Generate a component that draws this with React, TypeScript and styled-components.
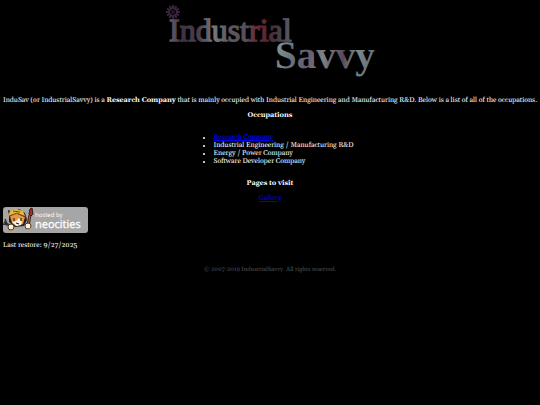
import React from "react";
import styled, { createGlobalStyle } from "styled-components";

const GlobalStyle = createGlobalStyle`
  body {
    margin: 0;
    background: #000;
    color: #fff;
    font-family: Georgia, Gelasio, "Liberation Serif", serif;
    font-size: 7px;
    line-height: 8px;
    text-rendering: geometricPrecision;
  }
`;

const Page = styled.main`
  display: flex;
  flex-direction: column;
`;

const Banner = styled.header`
  display: flex;
  justify-content: center;
  height: 80px;
  margin-bottom: 17px;
`;

const Logo = styled.svg`
  width: 216px;
  height: 80px;
`;

const Intro = styled.p`
  margin: 0;
  text-align: center;
`;

const Heading = styled.h2`
  margin: 7px 0 0;
  font-size: 7px;
  line-height: 8px;
  text-align: center;
`;

const Occupations = styled.ul`
  align-self: center;
  margin: 14px 0 7px;
  padding-left: 27px;
`;

const Link = styled.a`
  color: #0000ee;
`;

const GalleryLine = styled.p`
  margin: 7px 0 4px;
  text-align: center;
`;

const BadgeLink = styled.a`
  display: block;
  align-self: flex-start;
  height: 26px;
  margin-left: 3px;
`;

const Restore = styled.p`
  margin: 9px 3px 16px;
`;

const Footer = styled.footer`
  color: #505050;
  text-align: center;
  font-size: 6px;
`;

const teeth = Array.from({ length: 12 }, (_, i) => i * 30);

function Wordmark() {
  return (
    <Logo viewBox="0 0 216 80" role="img" aria-label="Industrial Savvy">
      <defs>
        <linearGradient id="metal" gradientUnits="userSpaceOnUse" x1="6" y1="0" x2="132" y2="0">
          <stop offset="0" stopColor="#68606f" />
          <stop offset="0.12" stopColor="#403242" />
          <stop offset="0.25" stopColor="#4b404e" />
          <stop offset="0.36" stopColor="#727a7d" />
          <stop offset="0.48" stopColor="#5d5860" />
          <stop offset="0.62" stopColor="#545059" />
          <stop offset="0.7" stopColor="#692a34" />
          <stop offset="0.79" stopColor="#572630" />
          <stop offset="0.85" stopColor="#40333f" />
          <stop offset="1" stopColor="#5e636e" />
        </linearGradient>
        <linearGradient id="steel" gradientUnits="userSpaceOnUse" x1="112" y1="46" x2="210" y2="66">
          <stop offset="0" stopColor="#8a9797" />
          <stop offset="0.2" stopColor="#66747a" />
          <stop offset="0.36" stopColor="#6c5869" />
          <stop offset="0.5" stopColor="#7e8588" />
          <stop offset="0.7" stopColor="#574756" />
          <stop offset="0.82" stopColor="#7b898d" />
          <stop offset="1" stopColor="#667078" />
        </linearGradient>
      </defs>
      <g fill="#38243b">
        {teeth.map((angle) => (
          <rect key={angle} x="10" y="5" width="2" height="4" transform={`rotate(${angle} 11 12)`} />
        ))}
        <circle cx="11" cy="12" r="4" fill="none" stroke="#38243b" strokeWidth="2" />
        <circle cx="11" cy="12" r="2" fill="#251727" />
      </g>
      <g fontFamily="Liberation Serif, serif">
        <text x="7" y="41" fontSize="32" fill="url(#metal)" stroke="url(#metal)" strokeWidth="1.4">Industrial</text>
        <text x="113" y="68" fontSize="39" fontWeight="700" fill="url(#steel)">Savvy</text>
      </g>
    </Logo>
  );
}

function NeocitiesBadge() {
  return (
    <svg width="85" height="26" viewBox="0 0 85 26" role="img" aria-label="Hosted by Neocities">
      <rect width="85" height="26" rx="3" fill="#a6a6a6" />
      <g fill="#fff" fontFamily="Open Sans, sans-serif">
        <text x="32" y="10" fontSize="6">hosted by</text>
        <text x="32" y="21" fontSize="11" stroke="#fff" strokeWidth=".3">neocities</text>
      </g>
      <path d="M6 9L5 3l5 2 6-3 6 4 2 7-3 6-9 1-6-5z" fill="#292019" />
      <path d="M7 9l2 7 5 3 6-2 2-7-8-3z" fill="#e79645" />
      <path d="M9 15l4-1 3-3 3 4-1 3-5 1z" fill="#fff2dc" />
      <path d="M5 9l2-5 6-2 7 2 2 5-7-2z" fill="#e9b638" />
      <path d="M6 9l8-3 10 5M10 4l7 1" fill="none" stroke="#725019" />
      <path d="M11 11v3M18 11v3M13 16l3 1" stroke="#1b1515" />
      <path d="M1 15l7 4M2 12l2 5M0 17l5 1" stroke="#303030" strokeWidth="1.5" />
      <path d="M27 8l-2 11" stroke="#35201d" strokeWidth="3" />
      <path d="M27 8l-2 11" stroke="#bd7040" strokeWidth="1" />
      <path d="M26 7l1-5 2-1 1 6-2 2z" fill="#a62d29" stroke="#351a1a" />
      <circle cx="8" cy="20" r="3" fill="#fff2dc" stroke="#44342a" />
      <circle cx="25" cy="19" r="3" fill="#fff2dc" stroke="#44342a" />
      <path d="M5 23q3 2 5 0M22 22q3 2 6-1" fill="none" stroke="#d38a42" />
    </svg>
  );
}

export default function App() {
  return (
    <>
      <GlobalStyle />
      <Page>
        <Banner><Wordmark /></Banner>
        <Intro>
          InduSav (or IndustrialSavvy) is a <b>Research Company</b> that is mainly occupied with Industrial Engineering and Manufacturing R&amp;D. Below is a list of all of the occupations.
        </Intro>
        <Heading>Occupations</Heading>
        <Occupations>
          <li><Link href="#research">Research Company</Link></li>
          <li>Industrial Engineering / Manufacturing R&amp;D</li>
          <li>Energy / Power Company</li>
          <li>Software Developer Company</li>
        </Occupations>
        <Heading>Pages to visit</Heading>
        <GalleryLine><Link href="#gallery">Gallery</Link></GalleryLine>
        <BadgeLink href="#neocities"><NeocitiesBadge /></BadgeLink>
        <Restore>Last restore: 9/27/2025</Restore>
        <Footer>© 2007-2019 IndustrialSavvy. All rights reserved.</Footer>
      </Page>
    </>
  );
}
